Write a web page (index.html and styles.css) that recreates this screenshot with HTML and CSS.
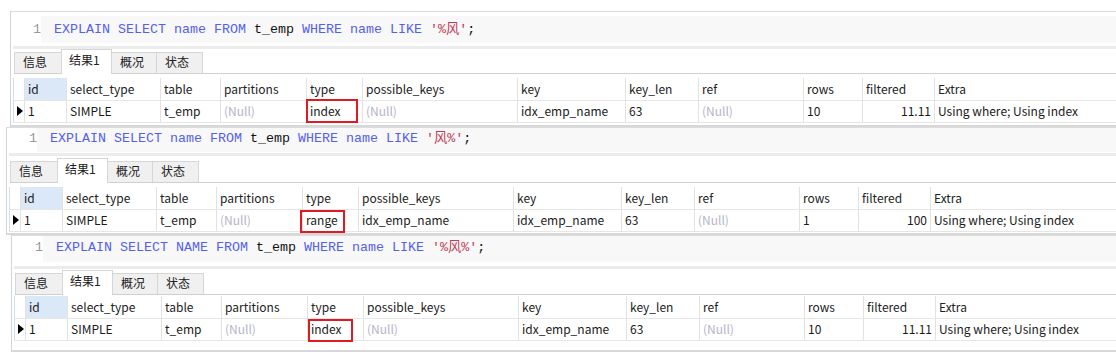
FILE: index.html
```html
<!DOCTYPE html>
<html lang="zh-CN">
<head>
    <meta charset="UTF-8">
    <title>EXPLAIN LIKE</title>
    <link rel="stylesheet" href="styles.css">
</head>
<body>
    <div class="page">
        <!-- 1: '%风' -->
        <div class="panel panel-one">
            <div class="editor">
                <div class="gutter">1</div>
                <div class="code"><span class="kw">EXPLAIN SELECT name FROM</span> t_emp <span class="kw">WHERE name LIKE</span> <span class="str">'%风'</span>;</div>
            </div>
            <div class="band"></div>
            <div class="tabs">
                <div class="tab t-info">信息</div>
                <div class="tab active t-res">结果1</div>
                <div class="tab t-prof">概况</div>
                <div class="tab t-stat">状态</div>
            </div>
            <table class="grid">
                <colgroup>
                    <col class="c-ind"><col class="c-id"><col class="c-sel"><col class="c-tbl"><col class="c-part"><col class="c-type"><col class="c-poss"><col class="c-key"><col class="c-len"><col class="c-ref"><col class="c-rows"><col class="c-filt"><col class="c-extra">
                </colgroup>
                <tr class="head">
                    <td class="ind"></td><td class="sorted">id</td><td>select_type</td><td>table</td><td>partitions</td><td>type</td><td>possible_keys</td><td>key</td><td>key_len</td><td>ref</td><td>rows</td><td>filtered</td><td>Extra</td>
                </tr>
                <tr>
                    <td class="ind"><span class="arrow"></span></td><td>1</td><td>SIMPLE</td><td>t_emp</td><td class="null">(Null)</td><td class="marked">index<span class="mark mark-one"></span></td><td class="null">(Null)</td><td>idx_emp_name</td><td>63</td><td class="null">(Null)</td><td>10</td><td class="num">11.11</td><td>Using where; Using index</td>
                </tr>
            </table>
        </div>

        <!-- 2: '风%' -->
        <div class="panel panel-two">
            <div class="editor">
                <div class="gutter">1</div>
                <div class="code"><span class="kw">EXPLAIN SELECT name FROM</span> t_emp <span class="kw">WHERE name LIKE</span> <span class="str">'风%'</span>;</div>
            </div>
            <div class="band"></div>
            <div class="tabs">
                <div class="tab t-info">信息</div>
                <div class="tab active t-res">结果1</div>
                <div class="tab t-prof">概况</div>
                <div class="tab t-stat">状态</div>
            </div>
            <table class="grid">
                <colgroup>
                    <col class="c-ind"><col class="c-id"><col class="c-sel"><col class="c-tbl"><col class="c-part"><col class="c-type"><col class="c-poss"><col class="c-key"><col class="c-len"><col class="c-ref"><col class="c-rows"><col class="c-filt"><col class="c-extra">
                </colgroup>
                <tr class="head">
                    <td class="ind"></td><td class="sorted">id</td><td>select_type</td><td>table</td><td>partitions</td><td>type</td><td>possible_keys</td><td>key</td><td>key_len</td><td>ref</td><td>rows</td><td>filtered</td><td>Extra</td>
                </tr>
                <tr>
                    <td class="ind"><span class="arrow"></span></td><td>1</td><td>SIMPLE</td><td>t_emp</td><td class="null">(Null)</td><td class="marked">range<span class="mark mark-two"></span></td><td>idx_emp_name</td><td>idx_emp_name</td><td>63</td><td class="null">(Null)</td><td>1</td><td class="num">100</td><td>Using where; Using index</td>
                </tr>
            </table>
        </div>

        <!-- 3: '%风%' -->
        <div class="panel panel-three">
            <div class="editor">
                <div class="gutter">1</div>
                <div class="code"><span class="kw">EXPLAIN SELECT NAME FROM</span> t_emp <span class="kw">WHERE name LIKE</span> <span class="str">'%风%'</span>;</div>
            </div>
            <div class="band"></div>
            <div class="tabs">
                <div class="tab t-info">信息</div>
                <div class="tab active t-res">结果1</div>
                <div class="tab t-prof">概况</div>
                <div class="tab t-stat">状态</div>
            </div>
            <table class="grid">
                <colgroup>
                    <col class="c-ind"><col class="c-id"><col class="c-sel"><col class="c-tbl"><col class="c-part"><col class="c-type"><col class="c-poss"><col class="c-key"><col class="c-len"><col class="c-ref"><col class="c-rows"><col class="c-filt"><col class="c-extra">
                </colgroup>
                <tr class="head">
                    <td class="ind"></td><td class="sorted">id</td><td>select_type</td><td>table</td><td>partitions</td><td>type</td><td>possible_keys</td><td>key</td><td>key_len</td><td>ref</td><td>rows</td><td>filtered</td><td>Extra</td>
                </tr>
                <tr>
                    <td class="ind"><span class="arrow"></span></td><td>1</td><td>SIMPLE</td><td>t_emp</td><td class="null">(Null)</td><td class="marked">index<span class="mark mark-three"></span></td><td class="null">(Null)</td><td>idx_emp_name</td><td>63</td><td class="null">(Null)</td><td>10</td><td class="num">11.11</td><td>Using where; Using index</td>
                </tr>
            </table>
        </div>
    </div>
</body>
</html>
```

FILE: styles.css
```css
body {
    margin: 0;
    padding: 0;
    background-color: #ffffff;
    font-family: "Noto Sans CJK SC", "Noto Sans", sans-serif;
    font-size: 12px;
    color: #1a1a1a;
    overflow: hidden;
}

.page {
    width: 1116px;
    height: 352px;
    padding-top: 11px;
    box-sizing: border-box;
    overflow: hidden;
}

.panel {
    background-color: #ffffff;
    border-top: 1px solid #dcdcdc;
    border-left: 1px solid #d4d4d4;
    border-bottom: 2px solid #d8d8d8;
    padding-left: 2px;
    box-sizing: border-box;
    overflow: hidden;
}

.panel-one {
    margin-left: 10px;
    height: 116px;
}

.panel-two {
    margin-left: 6px;
    height: 108px;
}

.panel-three {
    margin-left: 11px;
    height: 117px;
}

/* SQL editor line */
.editor {
    display: flex;
    height: 27px;
    margin-top: 4px;
    margin-bottom: 3px;
    font-family: "Liberation Mono", "Noto Sans CJK SC", monospace;
    font-size: 13.33px;
    line-height: 27px;
}

.panel-two .editor {
    margin-top: 0;
    margin-bottom: 1px;
    height: 24px;
    line-height: 22px;
}

.panel-three .editor {
    margin-top: 0;
    margin-bottom: 4px;
    height: 26px;
    line-height: 24px;
}

.gutter {
    width: 28px;
    padding-left: 20px;
    box-sizing: border-box;
    color: #9a9a9a;
    background-color: #ffffff;
}

.panel-three .gutter {
    width: 29px;
    padding-left: 21px;
}

.code {
    flex: 1;
    padding-left: 13px;
    background-color: #f8f8f8;
    color: #111111;
    white-space: pre;
}

.kw {
    color: #5360f2;
}

.str {
    color: #c23a55;
}

.band {
    height: 3px;
    background-color: #ececec;
}

/* result tabs */
.tabs {
    display: flex;
    align-items: flex-end;
    height: 24px;
    margin-left: 1px;
    border-bottom: 1px solid #d0d0d0;
}

.panel-two .tabs {
    height: 26px;
}

.panel-three .tabs {
    height: 25px;
}

.tab {
    height: 21px;
    line-height: 18px;
    padding-left: 8px;
    box-sizing: border-box;
    background-color: #f0f0f0;
    border: 1px solid #d6d6d6;
    border-bottom: none;
    margin-right: -1px;
    color: #202020;
}

.tab.active {
    height: 25px;
    line-height: 19px;
    background-color: #ffffff;
    padding-left: 7px;
    position: relative;
    z-index: 1;
    margin-bottom: -1px;
}

.t-info { width: 48px; }
.t-res { width: 51px; }
.t-prof { width: 46px; }
.t-stat { width: 47px; }

/* data grid */
.grid {
    table-layout: fixed;
    border-collapse: collapse;
    width: 1180px;
    margin-top: 4px;
}

.panel-three .grid {
    margin-top: 1px;
}

.grid td {
    height: 22px;
    padding: 0 0 0 3px;
    border-right: 1px solid #e2e2e2;
    border-bottom: 1px solid #e6e6e6;
    white-space: nowrap;
    overflow: visible;
    box-sizing: border-box;
    line-height: 20px;
}

.grid .head td {
    color: #222222;
}

.grid td.ind {
    padding: 0;
    border-left: 1px solid #cfe0f3;
}

.grid .sorted {
    background-color: #dbe8f7;
}

.grid .null {
    color: #b4b4c8;
}

.grid .num {
    text-align: right;
    padding-right: 3px;
}

.arrow {
    display: block;
    width: 0;
    height: 0;
    margin-left: 3px;
    border-top: 5px solid transparent;
    border-bottom: 5px solid transparent;
    border-left: 6px solid #000000;
}

.marked {
    position: relative;
}

/* red annotation boxes drawn over the type cell */
.mark {
    position: absolute;
    border: 2px solid #e01a22;
    box-sizing: border-box;
    pointer-events: none;
}

.mark-one {
    left: -1px;
    top: -2px;
    width: 52px;
    height: 24px;
}

.mark-two {
    left: -3px;
    top: 0;
    width: 45px;
    height: 23px;
}

.mark-three {
    left: 0;
    top: 0;
    width: 45px;
    height: 23px;
}

.c-ind { width: 11px; }
.c-id { width: 42px; }
.c-sel { width: 94px; }
.c-tbl { width: 60px; }
.c-part { width: 86px; }
.c-type { width: 56px; }
.c-poss { width: 155px; }
.c-key { width: 108px; }
.c-len { width: 73px; }
.c-ref { width: 105px; }
.c-rows { width: 59px; }
.c-filt { width: 72px; }
.c-extra { width: 259px; }
```
